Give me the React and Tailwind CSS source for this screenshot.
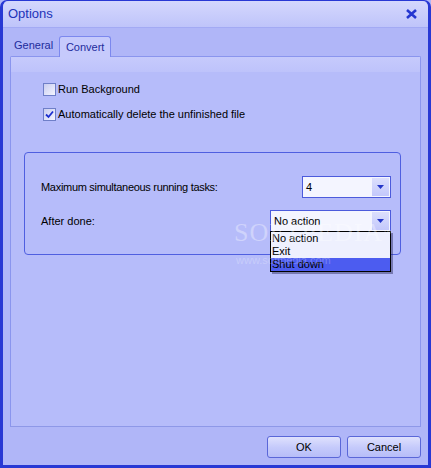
import { useState } from "react";

const FONT = { fontFamily: '"Liberation Sans", Arial, sans-serif' };

function Check({ checked, label }) {
  return (
    <label className="flex items-center h-[16px]">
      <span className="w-[13px] h-[13px] border border-[#6f7fc8] bg-gradient-to-br from-[#c9cdf0] to-[#f4f5ff] flex items-center justify-center">
        {checked && (
          <svg width="9" height="9" viewBox="0 0 9 9">
            <path d="M1 4.5 L3.5 7 L8 1.5" fill="none" stroke="#1c2fd0" strokeWidth="1.8" />
          </svg>
        )}
      </span>
      <span className="ml-[2px] text-[11px] text-black">{label}</span>
    </label>
  );
}

function Combo({ value, width }) {
  return (
    <div
      className="flex h-[22px] border border-[#4c5bdc] bg-[#f4f5ff]"
      style={{ width }}
    >
      <div className="flex-1 flex items-center pl-[3px] text-[11px] text-black">{value}</div>
      <div className="w-[17px] my-[1px] mr-[1px] bg-gradient-to-b from-[#dcdffd] to-[#c3c8fb] flex items-center justify-center">
        <svg width="7" height="4" viewBox="0 0 7 4">
          <path d="M0 0 H7 L3.5 4 Z" fill="#2436c8" />
        </svg>
      </div>
    </div>
  );
}

function Button({ children }) {
  return (
    <button className="w-[74px] h-[22px] rounded-[3px] border border-[#5a67d8] bg-gradient-to-b from-[#dfe1fd] via-[#c6cbfb] to-[#b7bdf8] text-[11px] text-black">
      {children}
    </button>
  );
}

export default function App() {
  const [tab] = useState("convert");
  return (
    <div className="w-[431px] h-[468px] bg-[#b0b6f8] relative overflow-hidden" style={FONT}>
      <div className="w-full h-full rounded-t-[7px] border-x-[3px] border-b-[3px] border-t border-[#2838d4] flex flex-col bg-[#b0b6f8]">
        {/* Title bar */}
        <div className="h-[27px] flex items-center justify-between px-[5px] bg-gradient-to-b from-[#d4d7fd] to-[#bfc4fa] border-b border-[#a3aaf4] rounded-t-[6px]">
          <span className="text-[13px] text-[#2233b8]">Options</span>
          <svg width="11" height="10" viewBox="0 0 11 10" className="mr-[6px]">
            <path d="M1 1 L10 9 M10 1 L1 9" stroke="#2436d0" strokeWidth="2.6" />
          </svg>
        </div>

        {/* Tabs */}
        <div className="px-[7px] flex items-end h-[28px]">
          <div className={`h-[21px] pl-[4px] pr-[6px] flex items-end pb-[3px] text-[11px] ${tab === "general" ? "" : "text-[#1e2c9c]"}`}>
            General
          </div>
          <div className="h-[21px] w-[52px] flex items-center justify-center border border-b-0 border-[#7c88ee] rounded-t-[3px] bg-[#c6cafc] text-[11px] text-[#1e2c9c] -mb-px relative z-10">
            Convert
          </div>
        </div>

        {/* Panel */}
        <div className="mx-[7px] h-[371px] border border-[#8a95ee] border-b-[#8e98e8] rounded-t-[2px] bg-[#b6bcfa] flex flex-col">
          <div className="h-[15px] bg-gradient-to-b from-[#c6cafc] to-[#bec3fb]" />
          <div className="pl-[32px] pt-[9px] flex flex-col gap-[9px]">
            <Check label="Run Background" />
            <Check checked label="Automatically delete the unfinished file" />
          </div>

          <div className="ml-[13px] mr-[19px] mt-[30px] h-[103px] border border-[#4f5fe0] rounded-[4px] pl-[16px] pr-[9px] pt-[23px] relative">
            <div className="flex items-center justify-between">
              <span className="text-[11px] text-black tracking-[-0.3px]">Maximum simultaneous running tasks:</span>
              <Combo value="4" width={89} />
            </div>
            <div className="flex items-center justify-between mt-[12px]">
              <span className="text-[11px] text-black">After done:</span>
              <div className="relative">
                <Combo value="No action" width={121} />
                {/* Open dropdown list */}
                <div className="absolute left-0 top-[21px] w-[121px] border border-black bg-[#eef0fe] shadow-[2px_2px_0_rgba(40,40,90,0.45)] text-[11px] text-black z-20">
                  <div className="h-[13px] leading-[13px] pl-[1px]">No action</div>
                  <div className="h-[13px] leading-[13px] pl-[1px]">Exit</div>
                  <div className="h-[13px] leading-[13px] pl-[1px] bg-[#4c5cf0]">Shut down</div>
                </div>
              </div>
            </div>
          </div>
        </div>

        {/* Buttons */}
        <div className="flex justify-end gap-[6px] pr-[7px] mt-[9px]">
          <Button>OK</Button>
          <Button>Cancel</Button>
        </div>
      </div>

      {/* Watermark */}
      <div className="absolute z-30 left-[234px] top-[220px] text-[26px] leading-[26px] tracking-[1px] text-white/35 pointer-events-none" style={{ fontFamily: '"Liberation Serif", serif' }}>
        SOFTPEDIA<span className="text-[9px] align-top">™</span>
      </div>
      <div className="absolute z-30 left-[236px] top-[252px] text-[11px] text-white/25 pointer-events-none">
        www.softpedia.com
      </div>
    </div>
  );
}
